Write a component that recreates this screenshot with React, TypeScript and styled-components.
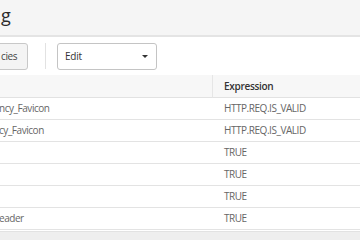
import React from "react";
import styled, { createGlobalStyle } from "styled-components";

const Global = createGlobalStyle`
  html, body { margin: 0; padding: 0; background: #ffffff; }
  body { font-family: "Open Sans", "Noto Sans", sans-serif; overflow: hidden; }
  #root { width: 360px; height: 240px; overflow: hidden; }
`;

const Page = styled.div`
  width: 360px;
  height: 240px;
  display: flex;
  flex-direction: column;
  overflow: hidden;
`;

const Header = styled.header`
  height: 35px;
  background: #f5f5f5;
  border-bottom: 2px solid #e4e4e4;
  box-sizing: content-box;
  display: flex;
  align-items: flex-start;
`;

const Title = styled.h1`
  margin: 3px 0 0 1px;
  font-size: 18px;
  line-height: 24px;
  font-weight: 400;
  color: #2b2b2b;
`;

const Toolbar = styled.div`
  display: flex;
  align-items: center;
  padding: 5px 0 0;
  height: 33px;
  box-sizing: border-box;
  margin-bottom: 5px;
`;

const Button = styled.button`
  height: 27px;
  margin-left: -12px;
  padding: 0 10px 0 12px;
  border: 1px solid #c8c8c8;
  border-radius: 3px;
  background: #f4f4f4;
  font-family: inherit;
  font-size: 10px;
  letter-spacing: -0.4px;
  color: #444;
  box-sizing: border-box;
`;

const Divider = styled.div`
  width: 1px;
  height: 26px;
  background: #e2e2e2;
  margin: 0 11px 0 17px;
`;

const Select = styled.div`
  width: 100px;
  height: 27px;
  box-sizing: border-box;
  border: 1px solid #c4c4c4;
  border-radius: 3px;
  background: #fff;
  display: flex;
  align-items: center;
  justify-content: space-between;
  padding: 0 8px 0 7px;
  font-size: 10px;
  letter-spacing: -0.3px;
  color: #333;
`;

const Caret = styled.span`
  width: 0;
  height: 0;
  border-left: 3.5px solid transparent;
  border-right: 3.5px solid transparent;
  border-top: 3.5px solid #333;
`;

const Table = styled.div`
  display: grid;
  grid-template-columns: 212px 1fr;
`;

const HeadCell = styled.div<{ $divider?: boolean }>`
  height: 22px;
  background: #f7f7f7;
  border-bottom: 1px solid #e2e2e2;
  border-left: ${(p) => (p.$divider ? "1px solid #e6e6e6" : "none")};
  padding-left: 11px;
  font-size: 10px;
  letter-spacing: -0.3px;
  font-weight: 600;
  line-height: 22px;
  color: #333;
`;

const Cell = styled.div<{ $first?: boolean }>`
  height: 21px;
  border-bottom: 1px solid #e3e3e3;
  padding-left: ${(p) => (p.$first ? "0" : "12px")};
  text-indent: ${(p) => (p.$first ? "-1px" : "0")};
  font-size: 10px;
  letter-spacing: -0.45px;
  line-height: 21px;
  color: #666;
  white-space: nowrap;
  overflow: hidden;
`;

const Footer = styled.div`
  flex: 1;
  margin-top: 1px;
  background: #eeeeee;
  border-top: 1px solid #e2e2e2;
`;

const rows = [
  { name: "ncy_Favicon", expr: "HTTP.REQ.IS_VALID" },
  { name: "cy_Favicon", expr: "HTTP.REQ.IS_VALID" },
  { name: "", expr: "TRUE" },
  { name: "", expr: "TRUE" },
  { name: "", expr: "TRUE" },
  { name: "eader", expr: "TRUE" },
];

export default function App() {
  return (
    <Page>
      <Global />
      <Header>
        <Title>g</Title>
      </Header>
      <Toolbar>
        <Button>cies</Button>
        <Divider />
        <Select>
          <span>Edit</span>
          <Caret />
        </Select>
      </Toolbar>
      <Table>
        <HeadCell />
        <HeadCell $divider>Expression</HeadCell>
        {rows.map((r, i) => (
          <React.Fragment key={i}>
            <Cell $first>{r.name}</Cell>
            <Cell>{r.expr}</Cell>
          </React.Fragment>
        ))}
      </Table>
      <Footer />
    </Page>
  );
}
